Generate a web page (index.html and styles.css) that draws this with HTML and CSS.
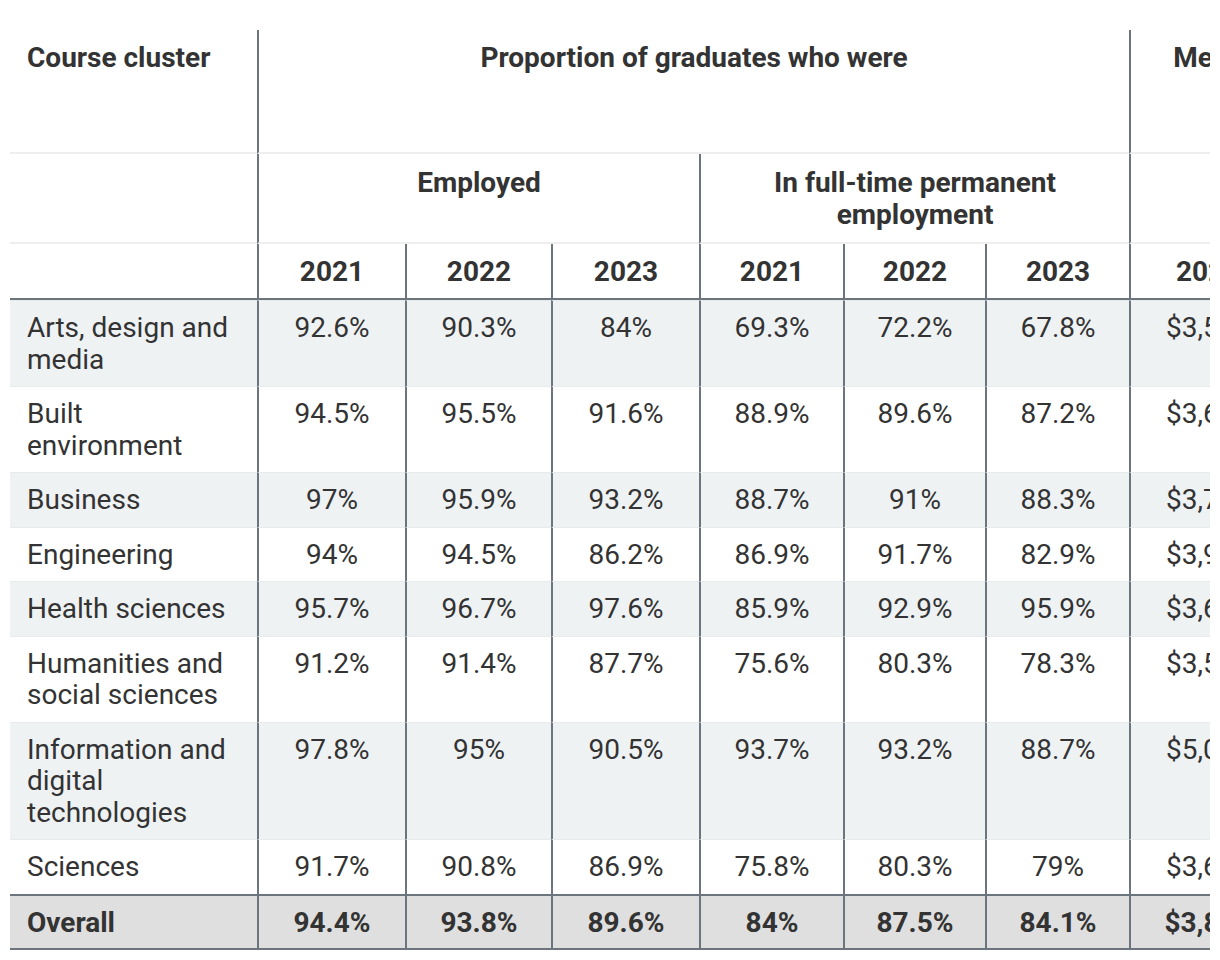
FILE: index.html
```html
<!DOCTYPE html>
<html lang="en">
<head>
<meta charset="utf-8">
<title>Graduate employment by course cluster</title>
<link rel="stylesheet" href="styles.css">
</head>
<body>
<div class="table-wrap">
  <table class="ges">
    <colgroup>
      <col class="c-name">
      <col class="c-w148">
      <col class="c-w146">
      <col class="c-w148">
      <col class="c-w144">
      <col class="c-w142">
      <col class="c-w144">
      <col class="c-w156">
      <col class="c-w147">
      <col class="c-w147">
    </colgroup>
    <thead>
      <tr class="h1">
        <th class="name">Course cluster</th>
        <th colspan="6" class="sep">Proportion of graduates who were</th>
        <th colspan="3" class="sep">Median gross monthly salary</th>
      </tr>
      <tr class="h2">
        <th class="name"></th>
        <th colspan="3" class="sep">Employed</th>
        <th colspan="3" class="sep">In full-time permanent employment</th>
        <th colspan="3" class="sep"></th>
      </tr>
      <tr class="h3">
        <th class="name"></th>
        <th class="sep">2021</th>
        <th class="sep">2022</th>
        <th class="sep">2023</th>
        <th class="sep">2021</th>
        <th class="sep">2022</th>
        <th class="sep">2023</th>
        <th class="sep">2021</th>
        <th class="sep">2022</th>
        <th class="sep">2023</th>
      </tr>
    </thead>
    <tbody>
      <tr class="alt">
        <td class="name">Arts, design and media</td>
        <td>92.6%</td><td>90.3%</td><td>84%</td><td>69.3%</td><td>72.2%</td><td>67.8%</td><td>$3,500</td><td>$3,600</td><td>$3,650</td>
      </tr>
      <tr>
        <td class="name">Built environment</td>
        <td>94.5%</td><td>95.5%</td><td>91.6%</td><td>88.9%</td><td>89.6%</td><td>87.2%</td><td>$3,600</td><td>$3,700</td><td>$3,800</td>
      </tr>
      <tr class="alt">
        <td class="name">Business</td>
        <td>97%</td><td>95.9%</td><td>93.2%</td><td>88.7%</td><td>91%</td><td>88.3%</td><td>$3,700</td><td>$3,800</td><td>$3,900</td>
      </tr>
      <tr>
        <td class="name">Engineering</td>
        <td>94%</td><td>94.5%</td><td>86.2%</td><td>86.9%</td><td>91.7%</td><td>82.9%</td><td>$3,900</td><td>$4,000</td><td>$4,100</td>
      </tr>
      <tr class="alt">
        <td class="name">Health sciences</td>
        <td>95.7%</td><td>96.7%</td><td>97.6%</td><td>85.9%</td><td>92.9%</td><td>95.9%</td><td>$3,600</td><td>$3,700</td><td>$3,800</td>
      </tr>
      <tr>
        <td class="name">Humanities and social sciences</td>
        <td>91.2%</td><td>91.4%</td><td>87.7%</td><td>75.6%</td><td>80.3%</td><td>78.3%</td><td>$3,500</td><td>$3,600</td><td>$3,700</td>
      </tr>
      <tr class="alt">
        <td class="name">Information and digital technologies</td>
        <td>97.8%</td><td>95%</td><td>90.5%</td><td>93.7%</td><td>93.2%</td><td>88.7%</td><td>$5,000</td><td>$5,100</td><td>$5,200</td>
      </tr>
      <tr>
        <td class="name">Sciences</td>
        <td>91.7%</td><td>90.8%</td><td>86.9%</td><td>75.8%</td><td>80.3%</td><td>79%</td><td>$3,600</td><td>$3,700</td><td>$3,800</td>
      </tr>
    </tbody>
    <tfoot>
      <tr class="total">
        <td class="name">Overall</td>
        <td>94.4%</td><td>93.8%</td><td>89.6%</td><td>84%</td><td>87.5%</td><td>84.1%</td><td>$3,800</td><td>$3,900</td><td>$4,000</td>
      </tr>
    </tfoot>
  </table>
</div>
</body>
</html>
```

FILE: styles.css
```css
html, body {
  margin: 0;
  padding: 0;
  background: #ffffff;
}

body {
  font-family: Roboto, "Liberation Sans", Arial, sans-serif;
  color: #333333;
}

.table-wrap {
  margin: 30px 10px 0 10px;
  width: 1200px;
  overflow: hidden;
}

.ges {
  border-collapse: separate;
  border-spacing: 0;
  table-layout: fixed;
  width: 1519px;
  font-size: 28px;
  line-height: 31.5px;
}

.c-name { width: 247px; }
.c-w148 { width: 148px; }
.c-w146 { width: 146px; }
.c-w144 { width: 144px; }
.c-w142 { width: 142px; }
.c-w156 { width: 156px; }
.c-w147 { width: 147px; }

.ges th,
.ges td {
  box-sizing: border-box;
  vertical-align: top;
  text-align: center;
  padding: 11px 8px 11px 8px;
}

.ges th {
  font-weight: 700;
  color: #333333;
}

.ges .name {
  text-align: left;
  padding-left: 17px;
  padding-right: 26px;
}

/* header rows */
.h1 th {
  height: 124px;
  padding-top: 12px;
  border-bottom: 2px solid #eeeeee;
}

.h2 th {
  height: 90px;
  padding-top: 13px;
  padding-left: 40px;
  padding-right: 40px;
  border-bottom: 2px solid #eeeeee;
}

.h2 th.name {
  padding-left: 17px;
}

.h3 th {
  height: 56px;
  padding-top: 12px;
  padding-bottom: 10px;
  border-bottom: 2px solid #6c757d;
}

.ges th.sep,
.ges td + td {
  border-left: 2px solid #6c757d;
}

/* body rows */
.ges tbody td {
  font-weight: 400;
  border-top: 1px solid #e8ebec;
}

.ges tbody tr.alt td {
  background: #eff2f3;
}

/* total row */
.total td {
  background: #dfdfdf;
  font-weight: 700;
  border-top: 2px solid #6c757d;
  border-bottom: 2px solid #6c757d;
  padding-top: 11px;
  padding-bottom: 10px;
}
```
